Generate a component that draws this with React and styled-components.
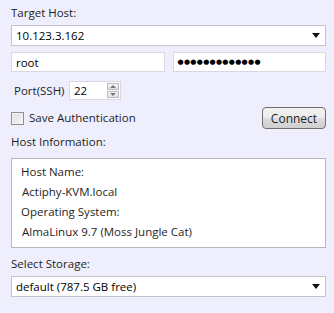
import React from "react";
import styled, { createGlobalStyle } from "styled-components";

const Global = createGlobalStyle`
  html, body {
    margin: 0;
    padding: 0;
    background: #eeeefc;
  }
  body {
    font-family: "Open Sans", "Noto Sans", sans-serif;
    font-size: 11.5px;
    color: #1e1e1e;
  }
`;

const Panel = styled.div`
  width: 334px;
  height: 313px;
  box-sizing: border-box;
  padding: 5px 8px 0 11px;
  display: flex;
  flex-direction: column;
`;

const Label = styled.div`
  height: 16px;
  line-height: 16px;
  margin-top: ${(p) => p.$mt || 0}px;
  margin-bottom: ${(p) => p.$gap || 4}px;
`;

const Field = styled.div`
  box-sizing: border-box;
  height: ${(p) => p.$h || 21}px;
  background: #fff;
  border: 1px solid ${(p) => (p.$combo ? "#c3c3cc" : "#d8d8e4")};
  display: flex;
  align-items: center;
  padding: 0 4px;
  flex: ${(p) => (p.$grow ? 1 : "none")};
  color: #000;
`;

const Arrow = styled.span`
  margin-left: auto;
  margin-right: 1px;
  width: 0;
  height: 0;
  border-left: 4px solid transparent;
  border-right: 4px solid transparent;
  border-top: 5px solid #111;
`;

const Row = styled.div`
  display: flex;
  align-items: center;
  gap: ${(p) => p.$gap || 0}px;
  margin-top: ${(p) => p.$mt || 0}px;
`;

const Dots = styled.span`
  letter-spacing: 0.3px;
  font-size: 7px;
  font-family: "DejaVu Sans", sans-serif;
`;

const PortLabel = styled.span`
  margin-left: 3px;
  width: 55px;
`;

const Spin = styled.div`
  box-sizing: border-box;
  width: 52px;
  height: 19px;
  background: #fff;
  border: 1px solid #d8d8e4;
  display: flex;
  align-items: center;
  padding-left: 4px;
  color: #000;
`;

const SpinBtns = styled.div`
  margin-left: auto;
  margin-right: 1px;
  width: 12px;
  height: 15px;
  display: flex;
  flex-direction: column;
  gap: 1px;
`;

const SpinBtn = styled.div`
  flex: 1;
  border: 1px solid #b9b9c2;
  background: linear-gradient(#f6f6f6, #e2e2e6);
  display: flex;
  align-items: center;
  justify-content: center;
  &::after {
    content: "";
    border-left: 3px solid transparent;
    border-right: 3px solid transparent;
    ${(p) => (p.$down ? "border-top: 3px solid #777;" : "border-bottom: 3px solid #777;")}
  }
`;

const Check = styled.span`
  box-sizing: border-box;
  width: 13px;
  height: 13px;
  margin-top: 2px;
  border: 1px solid #8e8f8f;
  background: linear-gradient(135deg, #dcdcdc, #f8f8f8);
  box-shadow: inset 0 0 0 1px #f4f4f4;
`;

const Button = styled.button`
  margin-left: auto;
  margin-top: 2px;
  width: 64px;
  height: 22px;
  border: 1px solid #707070;
  border-radius: 4px;
  background: linear-gradient(#f2f2f2 0%, #ebebeb 50%, #dddddd 51%, #cfcfcf 100%);
  font-family: inherit;
  font-size: 12px;
  color: #1e1e1e;
  padding: 0;
`;

const InfoBox = styled.div`
  box-sizing: border-box;
  height: 90px;
  background: #fff;
  border: 1px solid #b6b6bc;
  padding: 3px 0 0 9px;
  display: flex;
  flex-direction: column;
`;

const InfoLine = styled.div`
  height: 20px;
  line-height: 20px;
  padding-left: ${(p) => (p.$value ? 1 : 0)}px;
`;

export default function App() {
  return (
    <>
      <Global />
      <Panel>
        <Label>Target Host:</Label>
        <Field $combo>
          10.123.3.162
          <Arrow />
        </Field>
        <Row $gap={8} $mt={6}>
          <Field $grow $h={20}>root</Field>
          <Field $grow $h={20}>
            <Dots>●●●●●●●●●●●●●</Dots>
          </Field>
        </Row>
        <Row $mt={9}>
          <PortLabel>Port(SSH)</PortLabel>
          <Spin>
            22
            <SpinBtns>
              <SpinBtn />
              <SpinBtn $down />
            </SpinBtns>
          </Spin>
        </Row>
        <Row $gap={5} $mt={5}>
          <Check />
          <span>Save Authentication</span>
          <Button>Connect</Button>
        </Row>
        <Label $mt={5} $gap={8}>Host Information:</Label>
        <InfoBox>
          <InfoLine>Host Name:</InfoLine>
          <InfoLine $value>Actiphy-KVM.local</InfoLine>
          <InfoLine>Operating System:</InfoLine>
          <InfoLine $value>AlmaLinux 9.7 (Moss Jungle Cat)</InfoLine>
        </InfoBox>
        <Label $mt={8} $gap={4}>Select Storage:</Label>
        <Field $combo>
          default (787.5 GB free)
          <Arrow />
        </Field>
      </Panel>
    </>
  );
}
